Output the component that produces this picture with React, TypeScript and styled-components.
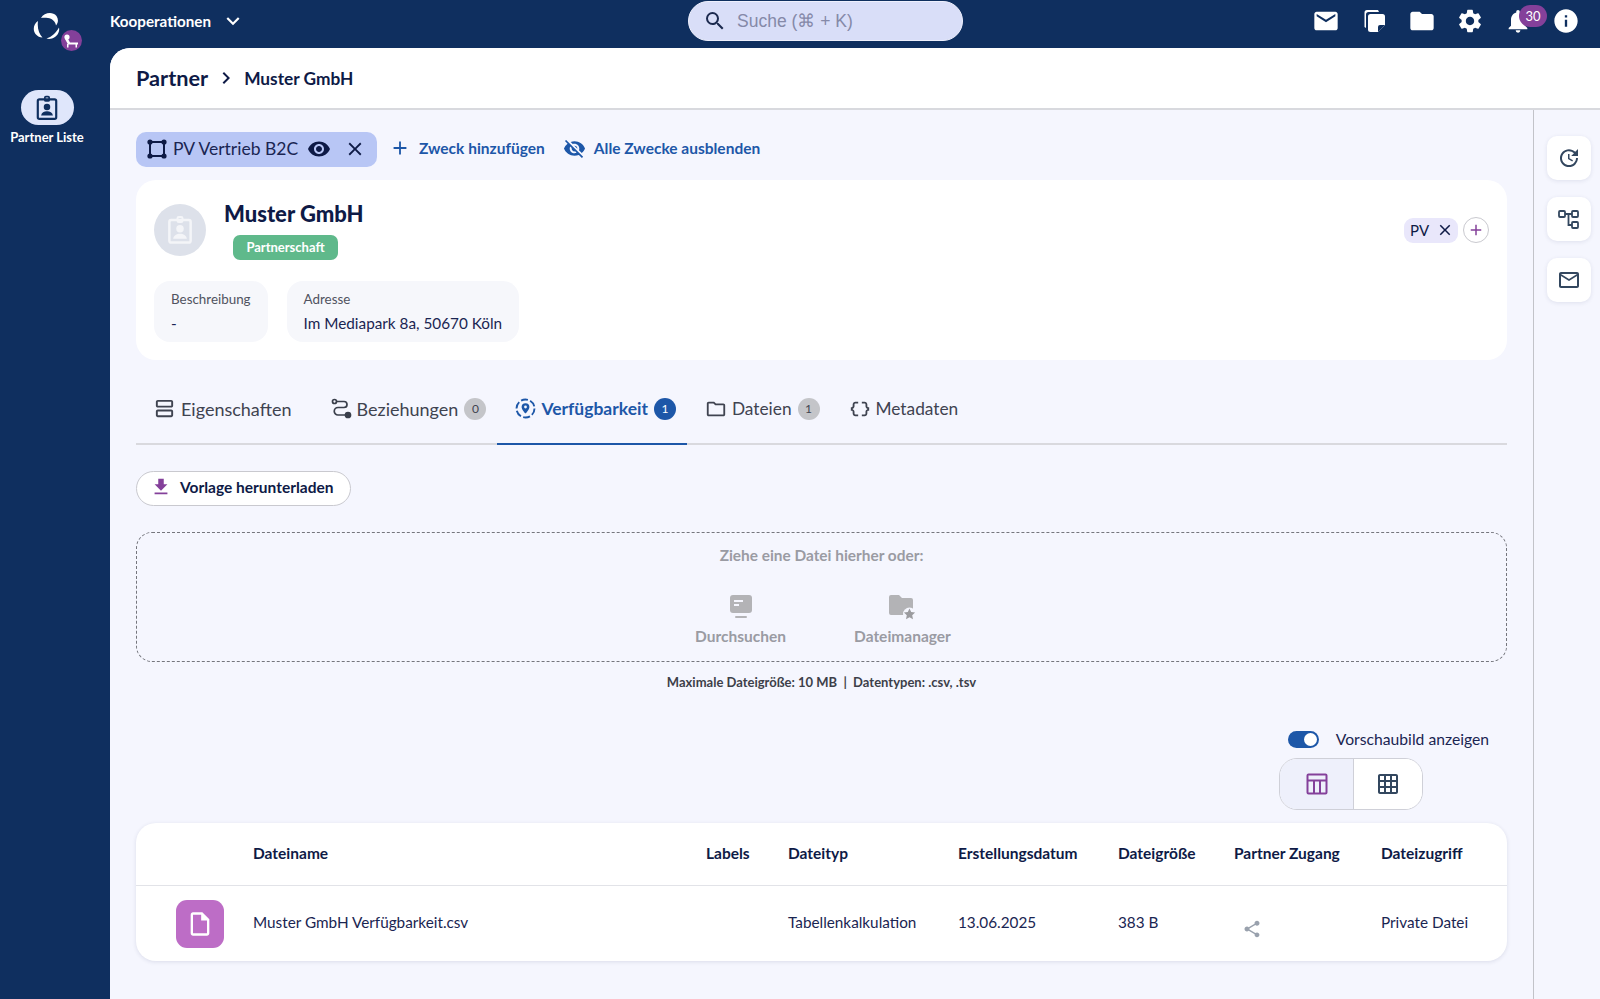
import React from 'react';
import styled, { createGlobalStyle } from 'styled-components';
import {
  MdAdd,
  MdClose,
  MdDownload,
  MdEmail,
  MdExpandMore,
  MdChevronRight,
  MdFolder,
  MdInfo,
  MdNotifications,
  MdOutlineEmail,
  MdOutlineFolder,
  MdOutlineGridOn,
  MdOutlineInsertDriveFile,
  MdOutlineViewAgenda,
  MdSearch,
  MdSettings,
  MdShare,
  MdUpdate,
  MdVisibility,
  MdVisibilityOff,
  MdDataObject,
} from 'react-icons/md';

const GlobalStyle = createGlobalStyle`
  html, body {
    margin: 0;
    padding: 0;
    background: #0f2f5f;
    font-family: 'Lato', 'Open Sans', sans-serif;
    color: #0e1a46;
  }
  * { box-sizing: border-box; }
`;

const BadgeIcon = ({ size = 26, fg = '#0f2f5f' }: { size?: number; fg?: string }) => (
  <svg width={size} height={size} viewBox="0 0 24 24" fill="none">
    <rect x="3.5" y="4" width="17" height="18" rx="1.5" stroke={fg} strokeWidth="2" />
    <rect x="10" y="1.5" width="4" height="4" rx="1" stroke={fg} strokeWidth="1.6" />
    <circle cx="12" cy="11" r="3" fill={fg} />
    <path d="M6.5 19c.5-2.8 2.8-4 5.5-4s5 1.2 5.5 4z" fill={fg} />
  </svg>
);

const Logo = () => (
  <svg width="28" height="28" viewBox="0 0 28 28" fill="#fff">
    <path d="M8 6C11 1 19 -1 23.500 4C25.500 7 25.500 10.500 23 13.500C22.500 9.500 19 6.500 15 6C12.500 5.700 10 5.700 8 6z" />
    <path d="M5 9C0.500 12 -0.500 18 2.500 22C4.500 24.500 7 25.500 9.500 25.500C6 22 4 16 5 9z" />
    <path d="M26 15.500C27 20 24 25 19 26.500C17 27 15 27 13.500 26.500C18.500 25 23 21 26 15.500z" />
  </svg>
);

const LoungerIcon = () => (
  <svg width="16" height="14" viewBox="0 0 16 14" fill="#fff">
    <circle cx="4" cy="3" r="2.600" />
    <path d="M2 5h3l2 3.500h8v2H5z" />
    <rect x="4" y="10" width="1.500" height="3.500" />
    <rect x="12.500" y="10" width="1.500" height="3.500" />
  </svg>
);

const CopyNoteIcon = () => (
  <svg width="28" height="28" viewBox="0 0 28 28" fill="#fff">
    <path d="M7 3h11l1 2H8.500A2.500 2.500 0 0 0 6 7.500V21l-1.500-1V5.500A2.500 2.500 0 0 1 7 3z" />
    <path d="M10.500 7h12A2.500 2.500 0 0 1 25 9.500V18l-7 7h-7.500A2.500 2.500 0 0 1 8 22.500v-13A2.500 2.500 0 0 1 10.500 7z" />
    <path d="M18 25v-5a2 2 0 0 1 2-2h5" fill="#0f2f5f" />
  </svg>
);

const PurposeIcon = () => (
  <svg width="22" height="22" viewBox="0 0 22 22" fill="#0e1a46" stroke="#0e1a46">
    <rect x="4" y="4" width="14" height="14" fill="none" strokeWidth="2" />
    <circle cx="4" cy="4" r="2.600" strokeWidth="0" />
    <circle cx="18" cy="4" r="2.600" strokeWidth="0" />
    <circle cx="4" cy="18" r="2.600" strokeWidth="0" />
    <circle cx="18" cy="18" r="2.600" strokeWidth="0" />
  </svg>
);

const RouteIcon = () => (
  <svg width="21" height="21" viewBox="0 0 21 21" fill="none" stroke="#3a3f4b" strokeWidth="1.700">
    <circle cx="3.500" cy="3.500" r="2" />
    <circle cx="17" cy="17" r="2.500" fill="#3a3f4b" />
    <path d="M5.500 3.500H13a3 3 0 0 1 0 6H7a3.500 3.500 0 0 0 0 7.500h7.500" />
  </svg>
);

const AvailabilityIcon = () => (
  <svg width="21" height="21" viewBox="0 0 21 21" fill="none">
    <circle cx="10.500" cy="10.500" r="9" stroke="#1d57a8" strokeWidth="1.900" strokeDasharray="7 2.400" />
    <path d="M10.500 5.200a3.900 3.900 0 0 0-3.900 3.900c0 2.800 3.900 6.500 3.900 6.500s3.900-3.700 3.900-6.500a3.900 3.900 0 0 0-3.900-3.900z" fill="#1d57a8" />
    <circle cx="10.500" cy="9" r="1.400" fill="#f5f6fe" />
  </svg>
);

const BrowseIcon = () => (
  <svg width="24" height="26" viewBox="0 0 24 26">
    <rect x="1" y="1" width="22" height="18" rx="3" fill="#b3b3b6" />
    <rect x="5" y="6" width="9" height="2" fill="#f5f6fe" />
    <rect x="5" y="10" width="5" height="2" fill="#f5f6fe" />
    <rect x="6" y="22" width="12" height="2" rx="1" fill="#b3b3b6" />
  </svg>
);

const FolderStarIcon = () => (
  <svg width="28" height="26" viewBox="0 0 28 26">
    <path d="M3 1h8l3 3h9a2 2 0 0 1 2 2v13a2 2 0 0 1-2 2H3a2 2 0 0 1-2-2V3a2 2 0 0 1 2-2z" fill="#b3b3b6" />
    <circle cx="21.500" cy="20" r="6.500" fill="#f5f6fe" />
    <path d="M21.500 14.500l1.700 3.600 3.900.5-2.900 2.700.8 3.900-3.500-2-3.500 2 .8-3.900-2.900-2.700 3.900-.5z" fill="#9b9b9f" />
  </svg>
);

const TableIcon = () => (
  <svg width="22" height="22" viewBox="0 0 22 22" fill="none" stroke="#84409a" strokeWidth="2">
    <rect x="1.500" y="1.500" width="19" height="19" rx="1" />
    <path d="M1.500 7.500h19M8 7.500v13M14 7.500v13" />
  </svg>
);

const Page = styled.div`
  display: flex;
  width: 1600px;
  height: 999px;
  overflow: hidden;
  background: #0f2f5f;
`;

const Sidebar = styled.aside`
  width: 110px;
  flex-shrink: 0;
  padding-right: 16px;
  display: flex;
  flex-direction: column;
  align-items: center;
`;

const LogoWrap = styled.div`
  position: relative;
  width: 28px;
  height: 28px;
  margin: 12px 0 0 -1px;
`;

const LogoBadge = styled.span`
  position: absolute;
  left: 28px;
  top: 18px;
  width: 21px;
  height: 21px;
  border-radius: 50%;
  background: #84409a;
  display: flex;
  align-items: center;
  justify-content: center;
`;

const NavPill = styled.div`
  width: 53px;
  height: 35px;
  margin-top: 50px;
  border-radius: 18px;
  background: #dfe6fb;
  display: flex;
  align-items: center;
  justify-content: center;
`;

const NavLabel = styled.div`
  margin-top: 4px;
  color: #fff;
  font-size: 13px;
  font-weight: 700;
  line-height: 16px;
`;

const Main = styled.div`
  flex: 1;
  display: flex;
  flex-direction: column;
  min-width: 0;
`;

const TopBar = styled.header`
  height: 48px;
  flex-shrink: 0;
  display: grid;
  grid-template-columns: 578px 275px 1fr;
  align-items: center;
`;

const Org = styled.div`
  display: flex;
  align-items: center;
  gap: 9px;
  color: #fff;
  font-size: 15.200px;
  font-weight: 700;
  padding-bottom: 6px;
`;

const Search = styled.div`
  height: 40px;
  margin-bottom: 7px;
  border-radius: 20px;
  background: #d9def8;
  border: 1px solid #eef0fd;
  display: flex;
  align-items: center;
  gap: 10px;
  padding: 1px 0 0 14px;
  color: #8589a8;
  font-family: 'Liberation Sans', sans-serif;
  font-size: 17.500px;
`;

const TopIcons = styled.div`
  display: flex;
  align-items: center;
  justify-content: flex-end;
  gap: 20px;
  padding: 0 20px 6px 0;
`;

const BellWrap = styled.div`
  position: relative;
  height: 28px;
  width: 28px;
`;

const BellBadge = styled.span`
  position: absolute;
  left: 15px;
  top: -2px;
  width: 28px;
  height: 22px;
  border-radius: 11px;
  background: #84409a;
  color: #fff;
  font-size: 13px;
  text-align: center;
  line-height: 22px;
`;

const Panel = styled.main`
  flex: 1;
  display: flex;
  flex-direction: column;
  min-height: 0;
  background: #f5f6fe;
  border-top-left-radius: 20px;
  overflow: hidden;
`;

const PageHeader = styled.div`
  height: 62px;
  flex-shrink: 0;
  background: #fff;
  border-bottom: 2px solid #d8d9de;
  display: flex;
  align-items: center;
  padding-left: 26px;
  color: #0e1a46;
`;

const Crumb = styled.span`
  font-size: 21.700px;
  font-weight: 700;
`;

const CrumbCurrent = styled.span`
  font-size: 17.300px;
  font-weight: 700;
`;

const CrumbArrow = styled(MdChevronRight)`
  margin: 0 6px;
`;

const PanelBody = styled.div`
  flex: 1;
  display: flex;
  min-height: 0;
`;

const Content = styled.div`
  width: 1423px;
  flex-shrink: 0;
  padding: 22px 26px 0;
`;

const Rail = styled.div`
  flex: 1;
  border-left: 1px solid #c2c3c9;
  display: flex;
  flex-direction: column;
  align-items: center;
  gap: 17px;
  padding: 26px 0 0 4px;
`;

const RailButton = styled.div`
  width: 44px;
  height: 44px;
  border-radius: 10px;
  background: #fff;
  box-shadow: 0 1px 4px rgba(30, 40, 90, 0.1);
  display: flex;
  align-items: center;
  justify-content: center;
  color: #33475f;
`;

const PurposeRow = styled.div`
  display: flex;
  align-items: center;
  height: 35px;
`;

const PurposeChip = styled.div`
  width: 241px;
  height: 35px;
  border-radius: 10px;
  background: #b8c6f5;
  display: flex;
  align-items: center;
  padding: 0 0 2px 10px;
  font-size: 17.500px;
  color: #1a2552;
`;

const PurposeText = styled.span`
  margin: 0 9px 0 5px;
  white-space: nowrap;
`;

const ChipClose = styled(MdClose)`
  margin-left: 13px;
`;

const RowAction = styled.div<{ $wide?: boolean }>`
  display: flex;
  align-items: center;
  gap: 8px;
  color: #1d57a8;
  font-size: 15.500px;
  font-weight: 700;
  padding-bottom: 3px;
  margin-left: ${(p) => (p.$wide ? '18px' : '12px')};
`;

const ProfileCard = styled.section`
  margin-top: 13px;
  height: 180px;
  border-radius: 20px;
  background: #fff;
  position: relative;
  padding: 24px 18px 0;
`;

const ProfileTop = styled.div`
  display: flex;
  gap: 18px;
`;

const Avatar = styled.div`
  width: 52px;
  height: 52px;
  border-radius: 50%;
  background: #dde1ea;
  display: flex;
  align-items: center;
  justify-content: center;
`;

const ProfileName = styled.h2`
  margin: -4px 0 0;
  font-size: 22px;
  line-height: 28px;
  font-weight: 900;
  color: #0e1a46;
`;

const TypePill = styled.span`
  display: inline-block;
  margin: 7px 0 0 9px;
  width: 105px;
  height: 25px;
  border-radius: 7px;
  background: #5fb98b;
  color: #fff;
  text-align: center;
  font-size: 13px;
  font-weight: 700;
  line-height: 25px;
`;

const InfoRow = styled.div`
  display: flex;
  gap: 19px;
  margin-top: 21px;
`;

const InfoBox = styled.div`
  height: 61px;
  border-radius: 16px;
  background: #f6f7fb;
  padding: 10px 17px 0;
`;

const InfoLabel = styled.div`
  font-size: 13.400px;
  line-height: 17px;
  color: #50535f;
`;

const InfoValue = styled.div`
  margin-top: 6px;
  font-size: 15.300px;
  line-height: 19px;
  color: #1a2552;
`;

const TagArea = styled.div`
  position: absolute;
  right: 18px;
  top: 37px;
  display: flex;
  align-items: center;
  gap: 5px;
`;

const Tag = styled.span`
  width: 54px;
  height: 25px;
  border-radius: 9px;
  background: #e9e7fb;
  display: flex;
  align-items: center;
  gap: 7px;
  padding-left: 6px;
  font-size: 15px;
  color: #0e1a46;
`;

const TagAdd = styled.span`
  width: 26px;
  height: 26px;
  border-radius: 50%;
  border: 1px solid #c9c9cf;
  display: flex;
  align-items: center;
  justify-content: center;
  color: #84409a;
`;

const Tabs = styled.nav`
  margin-top: 20px;
  height: 65px;
  display: flex;
  border-bottom: 2px solid #d9d9de;
`;

const Tab = styled.div<{ $active?: boolean; $compact?: boolean }>`
  height: 65px;
  display: flex;
  align-items: center;
  gap: 5px;
  padding: 0 11px 6px 18px;
  font-size: ${(p) => (p.$active ? '17.500px' : p.$compact ? '17.300px' : '18px')};
  font-weight: ${(p) => (p.$active ? 700 : 400)};
  color: ${(p) => (p.$active ? '#1d57a8' : '#3f4350')};
  border-bottom: 2px solid ${(p) => (p.$active ? '#1d57a8' : 'transparent')};
  &:first-child {
    padding-left: 17px;
    padding-right: 21px;
  }
`;

const Count = styled.span<{ $active?: boolean }>`
  width: 22px;
  height: 22px;
  border-radius: 50%;
  margin-left: 1px;
  background: ${(p) => (p.$active ? '#1d57a8' : '#c4c5c9')};
  color: ${(p) => (p.$active ? '#fff' : '#3f4350')};
  font-size: 12px;
  font-weight: 400;
  display: flex;
  align-items: center;
  justify-content: center;
`;

const DownloadButton = styled.div`
  margin-top: 26px;
  width: 215px;
  height: 35px;
  border-radius: 18px;
  background: #fff;
  border: 1px solid #c9c9cf;
  display: flex;
  align-items: center;
  gap: 8px;
  padding: 0 0 3px 13px;
  font-size: 15.500px;
  font-weight: 700;
  color: #0e1a46;
`;

const DropZone = styled.div`
  margin-top: 26px;
  height: 130px;
  border: 1px dashed #75767d;
  border-radius: 16px;
  display: flex;
  flex-direction: column;
  align-items: center;
  padding-top: 13px;
  color: #9a9ba3;
  font-size: 15.400px;
  font-weight: 700;
`;

const DropOptions = styled.div`
  display: flex;
  margin-top: 30px;
  padding-left: 3px;
  gap: 68px;
  font-size: 15.500px;
`;

const DropOption = styled.div`
  display: flex;
  flex-direction: column;
  align-items: center;
  gap: 7px;
`;

const DropHint = styled.div`
  margin-top: 12px;
  text-align: center;
  font-size: 13px;
  line-height: 16px;
  font-weight: 700;
  color: #3d3f49;
`;

const PreviewRow = styled.div`
  margin-top: 40px;
  height: 18px;
  padding-right: 18px;
  display: flex;
  align-items: center;
  justify-content: flex-end;
  gap: 17px;
  font-size: 15.700px;
  color: #1a2552;
`;

const Switch = styled.span`
  position: relative;
  width: 31px;
  height: 17px;
  border-radius: 9px;
  background: #1d57a8;
`;

const SwitchKnob = styled.span`
  position: absolute;
  right: 2px;
  top: 2px;
  width: 13px;
  height: 13px;
  border-radius: 50%;
  background: #fff;
`;

const ViewToggle = styled.div`
  margin: 10px 84px 0 auto;
  width: 144px;
  height: 52px;
  border-radius: 18px;
  border: 1px solid #cfd0d8;
  background: #fff;
  display: flex;
  overflow: hidden;
`;

const ViewOption = styled.div<{ $active?: boolean }>`
  flex: ${(p) => (p.$active ? '0 0 74px' : '1')};
  display: flex;
  align-items: center;
  justify-content: center;
  background: ${(p) => (p.$active ? '#eef0fb' : '#fff')};
  border-right: ${(p) => (p.$active ? '1px solid #cfd0d8' : 'none')};
  color: #33475f;
`;

const FileTable = styled.div`
  margin-top: 13px;
  height: 138px;
  border-radius: 20px;
  background: #fff;
  box-shadow: 0 1px 4px rgba(30, 40, 90, 0.12);
`;

const TableRow = styled.div<{ $head?: boolean }>`
  display: grid;
  grid-template-columns: 117px 453px 82px 170px 160px 116px 147px 1fr;
  align-items: center;
  height: ${(p) => (p.$head ? '63px' : '75px')};
  padding-bottom: ${(p) => (p.$head ? '3px' : '0')};
  border-bottom: ${(p) => (p.$head ? '1px solid #e2e3e8' : 'none')};
  font-size: ${(p) => (p.$head ? '15.500px' : '15.300px')};
  font-weight: ${(p) => (p.$head ? 700 : 400)};
  color: ${(p) => (p.$head ? '#0e1a46' : '#1a2552')};
`;

const BodyCell = styled.span`
  padding-bottom: 3px;
`;

const FileBadge = styled.div`
  width: 48px;
  height: 48px;
  margin-left: 40px;
  border-radius: 11px;
  background: #bd6dc6;
  color: #fff;
  display: flex;
  align-items: center;
  justify-content: center;
`;

const ShareCell = styled.div`
  padding: 10px 0 0 8px;
  color: #99a1ad;
  display: flex;
`;

const files = [
  {
    name: 'Muster GmbH Verfügbarkeit.csv',
    type: 'Tabellenkalkulation',
    date: '13.06.2025',
    size: '383 B',
    access: 'Private Datei',
  },
];

const App = () => {
  return (
    <Page>
      <GlobalStyle />
      <Sidebar>
        <LogoWrap>
          <Logo />
          <LogoBadge>
            <LoungerIcon />
          </LogoBadge>
        </LogoWrap>
        <NavPill>
          <BadgeIcon />
        </NavPill>
        <NavLabel>Partner Liste</NavLabel>
      </Sidebar>
      <Main>
        <TopBar>
          <Org>
            Kooperationen
            <MdExpandMore size={26} />
          </Org>
          <Search>
            <MdSearch size={24} color="#1c2a4f" />
            Suche (⌘ + K)
          </Search>
          <TopIcons>
            <MdEmail size={28} color="#fff" />
            <CopyNoteIcon />
            <MdFolder size={28} color="#fff" />
            <MdSettings size={28} color="#fff" />
            <BellWrap>
              <MdNotifications size={28} color="#fff" />
              <BellBadge>30</BellBadge>
            </BellWrap>
            <MdInfo size={28} color="#fff" />
          </TopIcons>
        </TopBar>
        <Panel>
          <PageHeader>
            <Crumb>Partner</Crumb>
            <CrumbArrow size={24} />
            <CrumbCurrent>Muster GmbH</CrumbCurrent>
          </PageHeader>
          <PanelBody>
            <Content>
              <PurposeRow>
                <PurposeChip>
                  <PurposeIcon />
                  <PurposeText>PV Vertrieb B2C</PurposeText>
                  <MdVisibility size={24} color="#0e1a46" />
                  <ChipClose size={22} color="#0e1a46" />
                </PurposeChip>
                <RowAction>
                  <MdAdd size={22} />
                  Zweck hinzufügen
                </RowAction>
                <RowAction $wide>
                  <MdVisibilityOff size={23} />
                  Alle Zwecke ausblenden
                </RowAction>
              </PurposeRow>

              <ProfileCard>
                <ProfileTop>
                  <Avatar>
                    <BadgeIcon size={30} fg="#f4f5f8" />
                  </Avatar>
                  <div>
                    <ProfileName>Muster GmbH</ProfileName>
                    <TypePill>Partnerschaft</TypePill>
                  </div>
                </ProfileTop>
                <InfoRow>
                  <InfoBox>
                    <InfoLabel>Beschreibung</InfoLabel>
                    <InfoValue>-</InfoValue>
                  </InfoBox>
                  <InfoBox>
                    <InfoLabel>Adresse</InfoLabel>
                    <InfoValue>Im Mediapark 8a, 50670 Köln</InfoValue>
                  </InfoBox>
                </InfoRow>
                <TagArea>
                  <Tag>
                    PV
                    <MdClose size={18} />
                  </Tag>
                  <TagAdd>
                    <MdAdd size={18} />
                  </TagAdd>
                </TagArea>
              </ProfileCard>

              <Tabs>
                <Tab>
                  <MdOutlineViewAgenda size={23} />
                  Eigenschaften
                </Tab>
                <Tab>
                  <RouteIcon />
                  Beziehungen
                  <Count>0</Count>
                </Tab>
                <Tab $active>
                  <AvailabilityIcon />
                  Verfügbarkeit
                  <Count $active>1</Count>
                </Tab>
                <Tab $compact>
                  <MdOutlineFolder size={22} />
                  Dateien
                  <Count>1</Count>
                </Tab>
                <Tab $compact>
                  <MdDataObject size={22} />
                  Metadaten
                </Tab>
              </Tabs>

              <DownloadButton>
                <MdDownload size={22} color="#84409a" />
                Vorlage herunterladen
              </DownloadButton>

              <DropZone>
                Ziehe eine Datei hierher oder:
                <DropOptions>
                  <DropOption>
                    <BrowseIcon />
                    Durchsuchen
                  </DropOption>
                  <DropOption>
                    <FolderStarIcon />
                    Dateimanager
                  </DropOption>
                </DropOptions>
              </DropZone>
              <DropHint>Maximale Dateigröße: 10 MB &nbsp;|&nbsp; Datentypen: .csv, .tsv</DropHint>

              <PreviewRow>
                <Switch>
                  <SwitchKnob />
                </Switch>
                Vorschaubild anzeigen
              </PreviewRow>
              <ViewToggle>
                <ViewOption $active>
                  <TableIcon />
                </ViewOption>
                <ViewOption>
                  <MdOutlineGridOn size={24} />
                </ViewOption>
              </ViewToggle>

              <FileTable>
                <TableRow $head>
                  <span />
                  <span>Dateiname</span>
                  <span>Labels</span>
                  <span>Dateityp</span>
                  <span>Erstellungsdatum</span>
                  <span>Dateigröße</span>
                  <span>Partner Zugang</span>
                  <span>Dateizugriff</span>
                </TableRow>
                {files.map((file) => (
                  <TableRow key={file.name}>
                    <FileBadge>
                      <MdOutlineInsertDriveFile size={28} />
                    </FileBadge>
                    <BodyCell>{file.name}</BodyCell>
                    <span />
                    <BodyCell>{file.type}</BodyCell>
                    <BodyCell>{file.date}</BodyCell>
                    <BodyCell>{file.size}</BodyCell>
                    <ShareCell>
                      <MdShare size={20} />
                    </ShareCell>
                    <BodyCell>{file.access}</BodyCell>
                  </TableRow>
                ))}
              </FileTable>
            </Content>
            <Rail>
              <RailButton>
                <MdUpdate size={24} />
              </RailButton>
              <RailButton>
                <svg width="22" height="22" viewBox="0 0 22 22" fill="none" stroke="currentColor" strokeWidth="1.800">
                  <rect x="1" y="3" width="6" height="6" rx="1" />
                  <rect x="14" y="3" width="6" height="6" rx="1" />
                  <rect x="14" y="14" width="6" height="6" rx="1" />
                  <path d="M7 6h7M10.500 6v11H14" />
                </svg>
              </RailButton>
              <RailButton>
                <MdOutlineEmail size={24} />
              </RailButton>
            </Rail>
          </PanelBody>
        </Panel>
      </Main>
    </Page>
  );
};

export default App;
